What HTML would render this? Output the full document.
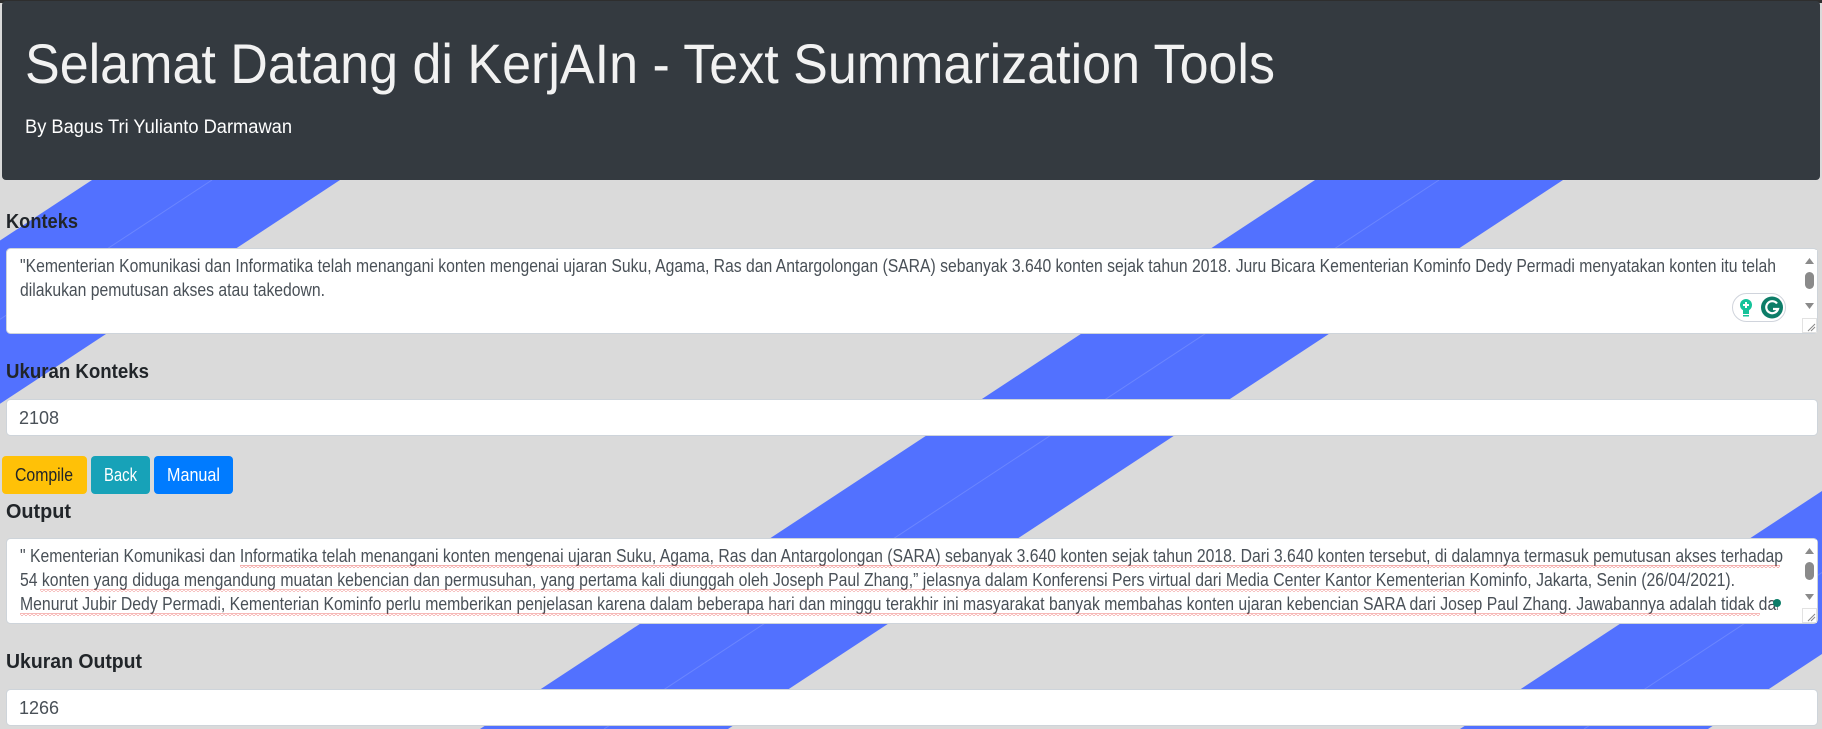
<!DOCTYPE html>
<html><head><meta charset="utf-8">
<style>
html,body{margin:0;padding:0;width:1822px;height:729px;overflow:hidden;background:#dadada;}
svg{position:absolute;left:0;top:0;}
text{font-family:"Liberation Sans",sans-serif;}
</style></head><body>
<svg width="1822" height="729" viewBox="0 0 1822 729" xmlns="http://www.w3.org/2000/svg">
<defs>
<clipPath id="c1"><rect x="7" y="249" width="1790" height="84"/></clipPath>
<clipPath id="c2"><rect x="7" y="539" width="1790" height="84"/></clipPath>
<clipPath id="c3"><rect x="7" y="539" width="1771" height="84"/></clipPath>
<pattern id="wv" width="4" height="3" patternUnits="userSpaceOnUse"><path d="M0 2.5 L2 0.5 L4 2.5" stroke="#e53935" stroke-width="1" fill="none"/></pattern>
</defs>
<!-- stripes -->
<g fill="#5271ff">
<polygon points="92,180 340,180 -485,723 -733,723"/>
<polygon points="1315,180 1563,180 728,729 480,729"/>
<polygon points="2295,180 2543,180 1708,729 1460,729"/>
</g>
<g stroke="#6b86ff" stroke-width="1">
<line x1="212" y1="180" x2="-100" y2="385"/>
<line x1="1439" y1="180" x2="604" y2="729"/>
<line x1="2419" y1="180" x2="1584" y2="729"/>
</g>
<!-- header -->
<rect x="0" y="0" width="1822" height="3" fill="#2e2e2e"/>
<rect x="2" y="1" width="1818" height="179" rx="4" fill="#343a40"/>
<text x="25" y="83" font-size="56" font-weight="300" fill="#f2f2f2" textLength="1250" lengthAdjust="spacingAndGlyphs">Selamat Datang di KerjAIn - Text Summarization Tools</text>
<text x="25" y="133" font-size="19" fill="#fff" textLength="267" lengthAdjust="spacingAndGlyphs">By Bagus Tri Yulianto Darmawan</text>

<!-- labels -->
<g fill="#212529" font-size="20" font-weight="bold">
<text x="6" y="228" textLength="72" lengthAdjust="spacingAndGlyphs">Konteks</text>
<text x="6" y="378" textLength="143" lengthAdjust="spacingAndGlyphs">Ukuran Konteks</text>
<text x="6" y="518" textLength="65" lengthAdjust="spacingAndGlyphs">Output</text>
<text x="6" y="668" textLength="136" lengthAdjust="spacingAndGlyphs">Ukuran Output</text>
</g>

<!-- konteks textarea -->
<rect x="6.5" y="248.5" width="1811" height="85" rx="4" fill="#fff" stroke="#ced4da"/>
<g clip-path="url(#c1)" fill="#495057" font-size="18">
<text x="20" y="272" textLength="1756" lengthAdjust="spacingAndGlyphs">"Kementerian Komunikasi dan Informatika telah menangani konten mengenai ujaran Suku, Agama, Ras dan Antargolongan (SARA) sebanyak 3.640 konten sejak tahun 2018. Juru Bicara Kementerian Kominfo Dedy Permadi menyatakan konten itu telah</text>
<text x="20" y="296" textLength="305" lengthAdjust="spacingAndGlyphs">dilakukan pemutusan akses atau takedown.</text>
</g>
<!-- scrollbar 1 -->
<rect x="1800" y="250" width="17" height="83" fill="#fff"/>
<polygon points="1805,264 1814,264 1809.5,258" fill="#8a8a8a"/>
<rect x="1805" y="272" width="9" height="17" rx="4.5" fill="#8a8a8a"/>
<polygon points="1805,303 1814,303 1809.5,309" fill="#8a8a8a"/>
<rect x="1802.5" y="318.5" width="14" height="14" fill="#fff" stroke="#e2e2e2"/>
<path d="M1808 331 L1815 324 M1811 331 L1815 327" stroke="#888" stroke-width="1"/>
<!-- grammarly -->
<rect x="1732.5" y="293.5" width="53" height="28" rx="14" fill="#fff" stroke="#d0d4dc"/>
<circle cx="1746" cy="305" r="6" fill="#15c39a"/>
<rect x="1743" y="310" width="6" height="4" fill="#15c39a"/>
<rect x="1743" y="315" width="6" height="1.5" fill="#15c39a"/>
<path d="M1746 302v6M1743 305h6" stroke="#fff" stroke-width="2"/>
<circle cx="1772" cy="307.5" r="11" fill="#0d7d68"/>
<path d="M1777 303.5 A6 6 0 1 0 1778 309 L1773 309" stroke="#fff" stroke-width="2.2" fill="none"/>

<!-- input 1 -->
<rect x="6.5" y="399.5" width="1811" height="36" rx="4" fill="#fff" stroke="#ced4da"/>
<text x="19" y="424" font-size="18" fill="#495057">2108</text>

<!-- buttons -->
<rect x="2" y="456" width="85" height="38" rx="4" fill="#ffc107"/>
<rect x="91" y="456" width="59" height="38" rx="4" fill="#17a2b8"/>
<rect x="154" y="456" width="79" height="38" rx="4" fill="#007bff"/>
<text x="15" y="481" font-size="18" fill="#212529" textLength="58" lengthAdjust="spacingAndGlyphs">Compile</text>
<text x="104" y="481" font-size="18" fill="#fff" textLength="33" lengthAdjust="spacingAndGlyphs">Back</text>
<text x="167" y="481" font-size="18" fill="#fff" textLength="53" lengthAdjust="spacingAndGlyphs">Manual</text>

<!-- output textarea -->
<rect x="6.5" y="538.5" width="1811" height="85" rx="4" fill="#fff" stroke="#ced4da"/>
<g clip-path="url(#c2)" fill="#495057" font-size="18">
<text x="20" y="562" textLength="1763" lengthAdjust="spacingAndGlyphs">" Kementerian Komunikasi dan Informatika telah menangani konten mengenai ujaran Suku, Agama, Ras dan Antargolongan (SARA) sebanyak 3.640 konten sejak tahun 2018. Dari 3.640 konten tersebut, di dalamnya termasuk pemutusan akses terhadap</text>
<text x="20" y="586" textLength="1715" lengthAdjust="spacingAndGlyphs">54 konten yang diduga mengandung muatan kebencian dan permusuhan, yang pertama kali diunggah oleh Joseph Paul Zhang,” jelasnya dalam Konferensi Pers virtual dari Media Center Kantor Kementerian Kominfo, Jakarta, Senin (26/04/2021).</text>
</g>
<g clip-path="url(#c3)" fill="#495057" font-size="18">
<text x="20" y="610" textLength="1765" lengthAdjust="spacingAndGlyphs">Menurut Jubir Dedy Permadi, Kementerian Kominfo perlu memberikan penjelasan karena dalam beberapa hari dan minggu terakhir ini masyarakat banyak membahas konten ujaran kebencian SARA dari Josep Paul Zhang. Jawabannya adalah tidak dari</text>
</g>
<!-- spell squiggles (approx) -->
<g fill="url(#wv)">
<rect x="240" y="565" width="1540" height="3" opacity="0.55"/>
<rect x="40" y="589" width="1440" height="3" opacity="0.45"/>
<rect x="20" y="613" width="1740" height="3" opacity="0.5"/>
</g>
<circle cx="1777" cy="603" r="4" fill="#0d7d68"/>
<!-- scrollbar 2 -->
<rect x="1800" y="540" width="17" height="83" fill="#fff"/>
<polygon points="1805,554 1814,554 1809.5,548" fill="#8a8a8a"/>
<rect x="1805" y="562" width="9" height="18" rx="4.5" fill="#8a8a8a"/>
<polygon points="1805,594 1814,594 1809.5,600" fill="#8a8a8a"/>
<rect x="1802.5" y="608.5" width="14" height="14" fill="#fff" stroke="#e2e2e2"/>
<path d="M1808 621 L1815 614 M1811 621 L1815 617" stroke="#888" stroke-width="1"/>

<!-- input 2 -->
<rect x="6.5" y="689.5" width="1811" height="36" rx="4" fill="#fff" stroke="#ced4da"/>
<text x="19" y="714" font-size="18" fill="#495057">1266</text>
</svg>
</body></html>
